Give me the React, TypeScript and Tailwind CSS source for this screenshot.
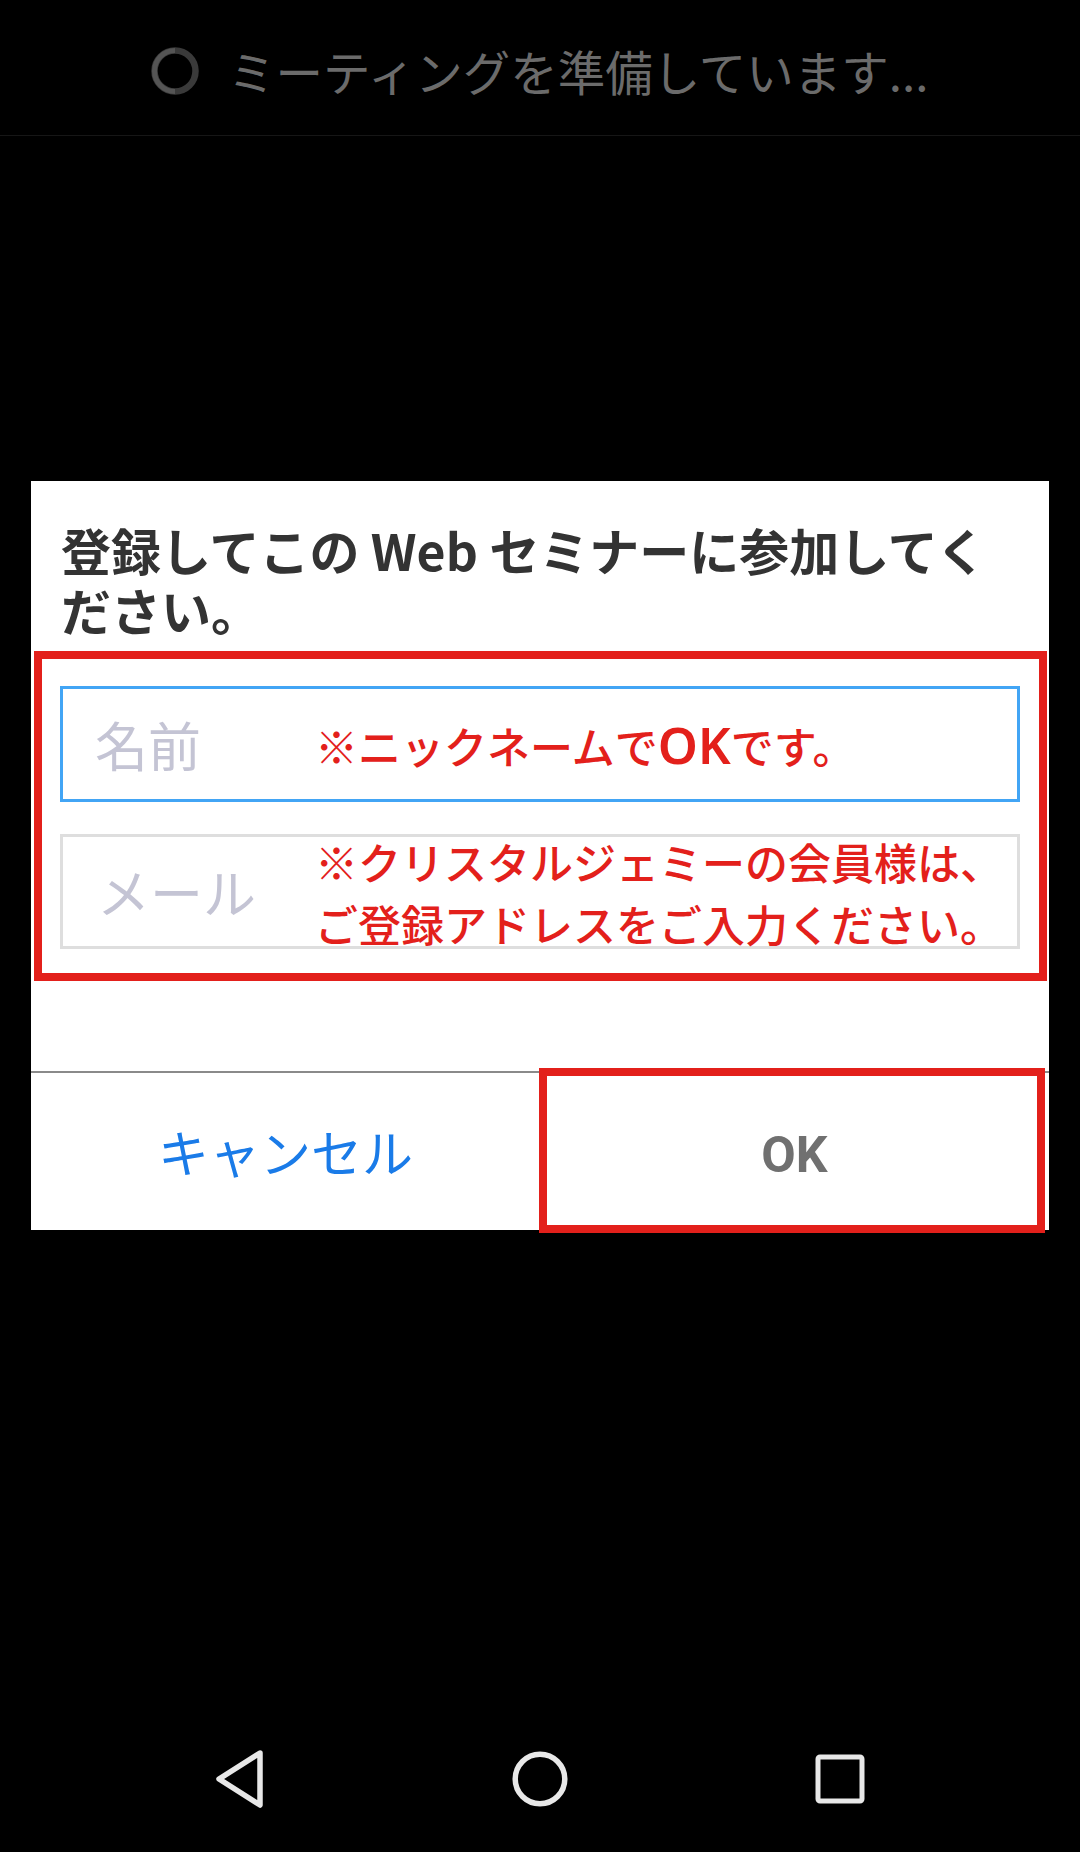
export default function App() {
  return (
    <div className="w-[1080px] h-[1852px] bg-black flex flex-col font-['Noto_Sans_CJK_JP',sans-serif] overflow-hidden">
      {/* Top status */}
      <div className="h-[136px] shrink-0 border-b border-[#161616] flex items-center pl-[151px] pt-[6px]">
        <svg width="48" height="48" viewBox="0 0 48 48" className="shrink-0">
          <circle cx="24" cy="24" r="20.5" fill="none" stroke="#3a3a3a" strokeWidth="6.5" />
          <path d="M24 3.5 A20.5 20.5 0 0 0 3.5 24 A20.5 20.5 0 0 0 24 44.5" fill="none" stroke="#555555" strokeWidth="5" />
        </svg>
        <span className="ml-[29px] text-[47.5px] leading-none text-[#6b6b6b] whitespace-nowrap">
          ミーティングを準備しています...
        </span>
      </div>

      {/* Middle */}
      <div className="flex-1 pt-[345px] px-[31px]">
        <div className="bg-white w-[1018px]">
          <div className="pt-[38px] pl-[30px] text-[50px] font-bold text-[#333333] whitespace-nowrap">
            <div className="h-[60px] leading-[60px]">登録してこの Web セミナーに参加してく</div>
            <div className="h-[60px] leading-[60px]">ださい。</div>
          </div>

          <div className="mt-[12px] ml-[3px] mr-[2px] border-[8px] border-[#e3201b] pl-[18px] pr-[19px] pt-[27px] pb-[24px] flex flex-col gap-[32px]">
            <div className="h-[116px] border-[3px] border-[#42a5f5] flex items-center">
              <div className="w-[252px] shrink-0 pl-[32px] text-[53px] leading-none text-[#c4c4d4]">名前</div>
              <div className="text-[43px] font-medium leading-none text-[#e3201b] whitespace-nowrap">
                ※ニックネームで<span className="font-['Noto_Sans',sans-serif] font-semibold text-[51px]">OK</span>です。
              </div>
            </div>
            <div className="h-[115px] border-[3px] border-[#dedede] flex items-center">
              <div className="w-[252px] shrink-0 pl-[34px] text-[53px] leading-none text-[#c4c4d4]">メール</div>
              <div className="text-[43px] font-medium leading-[62px] text-[#e3201b] whitespace-nowrap">
                ※クリスタルジェミーの会員様は、
                <br />
                ご登録アドレスをご入力ください。
              </div>
            </div>
          </div>

          <div className="mt-[90px] border-t-2 border-[#8a8a8a] h-[159px] grid grid-cols-2">
            <div className="flex items-center justify-center text-[51px] leading-none text-[#1a7be8]">
              キャンセル
            </div>
            <div className="relative flex items-center justify-center font-[Roboto,sans-serif] text-[50px] font-bold leading-none text-[#707070] pt-[6px]">
              OK
              <div className="absolute -left-[1px] -top-[5px] right-[4px] -bottom-[3px] border-[8px] border-[#e3201b]" />
            </div>
          </div>
        </div>
      </div>

      {/* Nav bar */}
      <div className="h-[146px] shrink-0 flex items-center justify-center">
        <div className="w-[300px] flex justify-center">
          <svg width="52" height="60" viewBox="0 0 52 60">
            <path d="M46 4 L5 30 L46 56 Z" fill="none" stroke="#e8e8e8" strokeWidth="5.5" strokeLinejoin="round" />
          </svg>
        </div>
        <div className="w-[300px] flex justify-center">
          <svg width="56" height="56" viewBox="0 0 56 56">
            <circle cx="28" cy="28" r="24.8" fill="none" stroke="#e8e8e8" strokeWidth="5.5" />
          </svg>
        </div>
        <div className="w-[300px] flex justify-center">
          <svg width="50" height="50" viewBox="0 0 50 50">
            <rect x="3" y="3" width="44" height="44" rx="2" fill="none" stroke="#e8e8e8" strokeWidth="5" />
          </svg>
        </div>
      </div>
    </div>
  );
}
